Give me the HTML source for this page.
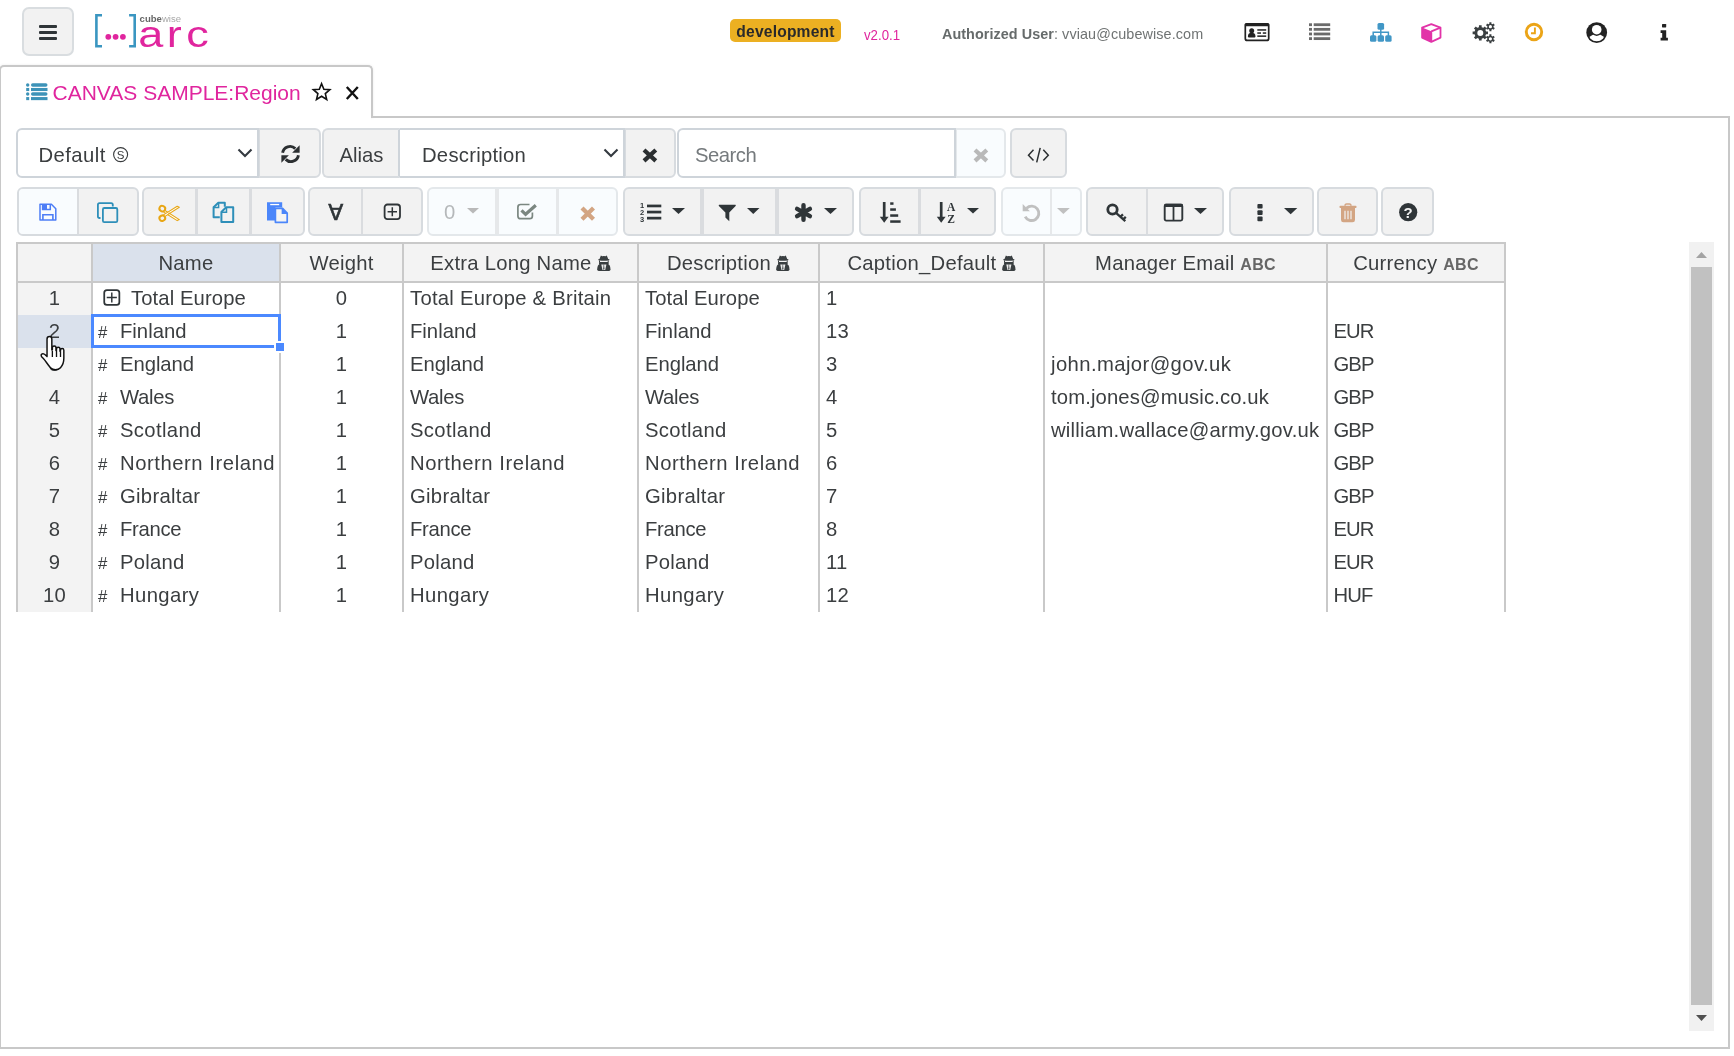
<!DOCTYPE html>
<html lang="en">
<head>
<meta charset="utf-8">
<title>Arc - CANVAS SAMPLE:Region</title>
<style>
*{box-sizing:border-box;margin:0;padding:0}
html,body{width:1734px;height:1056px;overflow:hidden;background:#fff}
body{position:relative;will-change:transform;font-family:"Liberation Sans",sans-serif;color:#3b3e40;font-size:20.25px;letter-spacing:.25px}
.abs,.abs2{position:absolute}
svg{display:block;overflow:visible;position:absolute}
#menu{left:22px;top:7px;width:52px;height:49px;background:#f2f2f2;border:2px solid #d9dde0;border-radius:7px}
#menu i{position:absolute;left:15px;width:18px;height:3px;background:#2f3538;border-radius:1px}
#badge{left:730px;top:19px;width:111px;height:23px;background:#ecb022;border-radius:5px;color:#2a2a2a;font-weight:bold;font-size:15.6px;line-height:25px;text-align:center;letter-spacing:.2px}
#ver{left:863.5px;top:24.5px;font-size:15.4px;color:#e0259e;line-height:20px;letter-spacing:0;transform:scaleX(.86);transform-origin:0 0}
#user{left:942px;top:24px;font-size:14.4px;color:#6f7373;line-height:20px;white-space:nowrap;letter-spacing:.1px}
#user b{color:#666b6b;letter-spacing:.05px}
#tabline{left:371px;top:116px;width:1359px;height:2px;background:#c8c8c8}
#panelR{left:1728px;top:116px;width:2px;height:933px;background:#c8c8c8}
#panelB{left:0;top:1047px;width:1730px;height:2px;background:#c8c8c8}
#panelL{left:0;top:70px;width:1px;height:978px;background:#c8c8c8}
#tab{left:-1px;top:65px;width:374px;height:53px;border:2px solid #c8c8c8;border-bottom:none;border-radius:5px 5px 0 0;background:#fff;box-shadow:0 0 3px rgba(0,0,0,.08)}
#tabcover{left:1px;top:116px;width:370px;height:6px;background:#fff}
#tabtxt{left:52.5px;top:79.5px;font-size:21px;line-height:26px;color:#e0259e;white-space:nowrap;letter-spacing:0}
.btn{position:absolute;background:#f2f2f2;border:2px solid #d7dbdf;height:50px;top:128px}
.r2{top:187px;height:49px}
.dis{background:#f9fcfe;border-color:#e4e8eb}
.inp{position:absolute;background:#fff;border:2px solid #ced4da;height:50px;top:128px;line-height:49px;white-space:nowrap}
.lbl{position:absolute;top:.6px;line-height:49px;white-space:nowrap}
.rl{border-radius:6px 0 0 6px}.rr{border-radius:0 6px 6px 0}.ra{border-radius:6px}.rn{border-radius:0}
.nl{border-left-width:0}.l1{border-left-width:1px}
.hc{position:absolute;z-index:2;top:242px;height:41px;background:#f3f3f3;border:2px solid #c9c9c9;border-right:none;text-align:center;line-height:38px;white-space:nowrap}
.hc.sel{background:#dae1ec}
.hc small{font-size:16px;font-weight:bold;color:#666;letter-spacing:.3px}
.vl{position:absolute;top:283px;width:2px;height:329px;background:#c9c9c9}
.c{position:absolute;height:33px;line-height:33.8px;white-space:nowrap}
.rh{left:18px;width:73px;text-align:center;background:#f3f3f3}
.hash{font-size:16.8px;letter-spacing:0;margin-top:1.2px}
</style>
</head>
<body>
<div id="menu" class="abs"><i style="top:16px"></i><i style="top:22px"></i><i style="top:28px"></i></div>
<svg style="left:90px;top:8px" width="130" height="46" viewBox="90 8 130 46"><path d="M102 15.200H96.400V46.300H102" fill="none" stroke="#3a96c1" stroke-width="2.600"/><path d="M129.100 15.200H134.700V46.300H129.100" fill="none" stroke="#3a96c1" stroke-width="2.600"/><circle cx="108.300" cy="36.800" r="2.900" fill="#e0259e"/><circle cx="115.600" cy="36.800" r="2.900" fill="#e0259e"/><circle cx="122.900" cy="36.800" r="2.900" fill="#e0259e"/><text transform="translate(0 47.100) scale(1.200 1)" x="115.17 138.90 155.17" y="0" font-family="Liberation Sans,sans-serif" font-size="37.500" fill="#e0259e">arc</text><text x="139.600" y="22.200" font-family="Liberation Sans,sans-serif" font-size="9.600" font-weight="bold" fill="#666" letter-spacing="0" textLength="41.500" lengthAdjust="spacingAndGlyphs">cube<tspan fill="#a9a9a9" font-weight="normal">wise</tspan></text></svg>
<div id="badge" class="abs">development</div>
<div id="ver" class="abs">v2.0.1</div>
<div id="user" class="abs"><b>Authorized User</b>: vviau@cubewise.com</div>
<svg style="left:1244px;top:22.3px" width="26" height="20" viewBox="0 0 26 20"><rect x="1.300" y="2" width="23.400" height="16.400" rx="2" fill="none" stroke="#222" stroke-width="1.700"/><rect x="0.600" y="1" width="24.800" height="3.300" rx="1.500" fill="#222"/><circle cx="7.700" cy="8.800" r="2.500" fill="#222"/><path d="M3.900 14.300c0-2.700 1.500-3.600 3.800-3.600s3.800 .9 3.800 3.600c0 1-.6 1.300-1.500 1.300h-4.600c-.9 0-1.500-.3-1.500-1.300z" fill="#222"/><rect x="13.300" y="7.200" width="8.900" height="1.500" fill="#222"/><rect x="13.300" y="10.300" width="3.700" height="1.500" fill="#222"/><rect x="18.800" y="10.300" width="3.400" height="1.500" fill="#222"/><rect x="13.300" y="13.400" width="8.900" height="1.500" fill="#222"/></svg>
<svg style="left:1309px;top:23px" width="22" height="18" viewBox="0 0 22 18"><rect x="0" y="0.30" width="3" height="2.800" fill="#6b6b6b"/><rect x="4.700" y="0.30" width="16.500" height="2.800" fill="#6b6b6b"/><rect x="0" y="4.94" width="3" height="2.800" fill="#6b6b6b"/><rect x="4.700" y="4.94" width="16.500" height="2.800" fill="#6b6b6b"/><rect x="0" y="9.58" width="3" height="2.800" fill="#6b6b6b"/><rect x="4.700" y="9.58" width="16.500" height="2.800" fill="#6b6b6b"/><rect x="0" y="14.22" width="3" height="2.800" fill="#6b6b6b"/><rect x="4.700" y="14.22" width="16.500" height="2.800" fill="#6b6b6b"/></svg>
<svg style="left:1370px;top:23px" width="22" height="19" viewBox="0 0 22 19"><rect x="7.500" y="0" width="6.600" height="6.700" rx="1.500" fill="#4197c6"/><rect x="0" y="12.200" width="6.400" height="6.600" rx="1.500" fill="#4197c6"/><rect x="7.600" y="12.200" width="6.400" height="6.600" rx="1.500" fill="#4197c6"/><rect x="15.200" y="12.200" width="6.400" height="6.600" rx="1.500" fill="#4197c6"/><path d="M10.800 5v8M3.200 13V9.300H18.400V13" fill="none" stroke="#4197c6" stroke-width="1.500"/></svg>
<svg style="left:1421px;top:22px" width="21" height="21" viewBox="0 0 21 21"><path d="M10.300 2.200L19.500 5.600V15.600L10.300 19.900L1.100 15.600V5.600Z" fill="#fff" stroke="#e233a8" stroke-width="1.800" stroke-linejoin="round"/><path d="M1.100 5.600L10.300 9.300V19.900L1.100 15.600Z" fill="#e233a8"/><path d="M10.300 9.300L19.500 5.600M10.300 9.300V19.900" stroke="#e233a8" stroke-width="1.800" fill="none"/></svg>
<svg style="left:1471.5px;top:21px" width="24" height="23" viewBox="0 0 24 23"><path d="M15.98 10.56L15.98 13.24L14.04 13.28L13.33 14.98L14.68 16.39L12.79 18.28L11.38 16.93L9.68 17.64L9.64 19.58L6.96 19.58L6.92 17.64L5.22 16.93L3.81 18.28L1.92 16.39L3.27 14.98L2.56 13.28L0.62 13.24L0.62 10.56L2.56 10.52L3.27 8.82L1.92 7.41L3.81 5.52L5.22 6.87L6.92 6.16L6.96 4.22L9.64 4.22L9.68 6.16L11.38 6.87L12.79 5.52L14.68 7.41L13.33 8.82L14.04 10.52ZM11.30 11.90A3 3 0 1 0 5.30 11.90A3 3 0 1 0 11.30 11.90Z" fill="#3a3f41" fill-rule="evenodd"/><path d="M22.81 7.01L21.76 8.84L20.55 8.07L19.40 8.74L19.47 10.17L17.37 10.18L17.42 8.75L16.27 8.09L15.06 8.86L14.00 7.05L15.27 6.38L15.27 5.05L13.99 4.39L15.04 2.56L16.25 3.33L17.40 2.66L17.33 1.23L19.43 1.22L19.38 2.65L20.53 3.31L21.74 2.54L22.80 4.35L21.53 5.02L21.53 6.35ZM20.00 5.70A1.6 1.6 0 1 0 16.80 5.70A1.6 1.6 0 1 0 20.00 5.70Z" fill="#3a3f41" fill-rule="evenodd"/><path d="M22.81 19.11L21.76 20.94L20.55 20.17L19.40 20.84L19.47 22.27L17.37 22.28L17.42 20.85L16.27 20.19L15.06 20.96L14.00 19.15L15.27 18.48L15.27 17.15L13.99 16.49L15.04 14.66L16.25 15.43L17.40 14.76L17.33 13.33L19.43 13.32L19.38 14.75L20.53 15.41L21.74 14.64L22.80 16.45L21.53 17.12L21.53 18.45ZM20.00 17.80A1.6 1.6 0 1 0 16.80 17.80A1.6 1.6 0 1 0 20.00 17.80Z" fill="#3a3f41" fill-rule="evenodd"/></svg>
<svg style="left:1524px;top:22.3px" width="20" height="20" viewBox="0 0 20 20"><circle cx="10" cy="10" r="7.700" fill="none" stroke="#eba417" stroke-width="2.900"/><path d="M10.900 5.600V11.200H7" fill="none" stroke="#eba417" stroke-width="1.900"/></svg>
<svg style="left:1586px;top:22px" width="22" height="22" viewBox="0 0 22 22"><circle cx="10.700" cy="10.600" r="10.400" fill="#232323"/><clipPath id="ucp"><circle cx="10.700" cy="10.600" r="8.700"/></clipPath><ellipse cx="10.700" cy="19.900" rx="8.800" ry="8" fill="#fff" clip-path="url(#ucp)"/><circle cx="10.700" cy="7.700" r="6.200" fill="#232323"/><circle cx="10.700" cy="7.700" r="4.800" fill="#fff"/></svg>
<svg style="left:1659.6px;top:23.7px" width="9" height="18" viewBox="0 0 9 18"><rect x="2" y="0" width="4.200" height="3.400" rx=".6" fill="#232323"/><path d="M0.600 6.300H6.200V13.700H7.900V16.400H0.600V13.700H2.200V9H0.600Z" fill="#232323"/></svg>
<div id="tab" class="abs"></div><div id="tabline" class="abs"></div><div id="tabcover" class="abs"></div><div id="panelR" class="abs"></div><div id="panelB" class="abs"></div><div id="panelL" class="abs"></div>
<div id="tabtxt" class="abs">CANVAS SAMPLE:Region</div>
<svg style="left:25.8px;top:82.6px" width="22" height="18" viewBox="0 0 22 18"><circle cx="1.700" cy="1.95" r="1.700" fill="#3d93b8"/><rect x="5" y="0.20" width="16.500" height="3.500" rx="1.700" fill="#3d93b8"/><rect x="0.200" y="4.95" width="3" height="3.100" fill="#3d93b8"/><rect x="5" y="4.95" width="16.500" height="3.100" fill="#3d93b8"/><circle cx="1.700" cy="11.05" r="1.700" fill="#3d93b8"/><rect x="5" y="9.30" width="16.500" height="3.500" rx="1.700" fill="#3d93b8"/><rect x="0.200" y="14.05" width="3" height="3.100" fill="#3d93b8"/><rect x="5" y="14.05" width="16.500" height="3.100" fill="#3d93b8"/></svg>
<svg style="left:311.6px;top:82.2px" width="20" height="19" viewBox="0 0 20 19"><path d="M9.60 1.70L11.89 7.24L17.87 7.71L13.31 11.61L14.71 17.44L9.60 14.30L4.49 17.44L5.89 11.61L1.33 7.71L7.31 7.24Z" fill="none" stroke="#111" stroke-width="1.600" stroke-linejoin="miter"/></svg>
<svg style="left:345px;top:85px" width="15" height="16" viewBox="0 0 15 16"><path d="M1.800 2L12.800 14M12.800 2L1.800 14" stroke="#111" stroke-width="2.400" fill="none"/></svg>
<div class="inp rl" style="left:16px;width:243px;"><span class="lbl" style="left:20.5px;letter-spacing:.45px;top:.5px">Default</span><svg style="left:94px;top:16.2px" width="18" height="18" viewBox="0 0 18 18"><circle cx="8.600" cy="8.600" r="7" fill="none" stroke="#373a3c" stroke-width="1.100"/><text x="8.600" y="12.700" text-anchor="middle" font-family="Liberation Sans,sans-serif" font-size="11.500" fill="#373a3c" letter-spacing="0">S</text></svg><svg style="left:218.7px;top:18.1px" width="16" height="10" viewBox="0 0 16 10"><path d="M1.500 1.500L8 8L14.500 1.500" fill="none" stroke="#343a40" stroke-width="2.100" stroke-linecap="butt"/></svg></div>
<div class="btn rr l1" style="left:259px;width:62px;"><svg style="left:20.5px;top:15.2px" width="19" height="18" viewBox="0 0 19 18"><path d="M1.600 7.800A7.500 7.500 0 0 1 14.300 3.600" fill="none" stroke="#2b2f31" stroke-width="2.900"/><path d="M17.400 10.200A7.500 7.500 0 0 1 4.700 14.400" fill="none" stroke="#2b2f31" stroke-width="2.900"/><path d="M18.600 0.200V7.700H11.100Z" fill="#2b2f31"/><path d="M0.400 17.800V10.300H7.900Z" fill="#2b2f31"/></svg></div>
<div class="btn rl" style="left:322px;width:78px;border-right-color:#ced4da"><span class="lbl" style="left:15.5px;letter-spacing:0">Alias</span></div>
<div class="inp rn nl" style="left:400px;width:225px;"><span class="lbl" style="left:22px">Description</span><svg style="left:203px;top:18.1px" width="16" height="10" viewBox="0 0 16 10"><path d="M1.500 1.500L8 8L14.500 1.500" fill="none" stroke="#343a40" stroke-width="2.100" stroke-linecap="butt"/></svg></div>
<div class="btn rr l1" style="left:625px;width:51px;"><svg style="left:15.8px;top:18px" width="15.8" height="14.9" viewBox="0 0 15.8 14.9"><path d="M2 2L13.8 12.9M13.8 2L2 12.9" stroke="#2b2f31" stroke-width="4.2" stroke-linecap="butt" fill="none"/></svg></div>
<div class="inp rl" style="left:677px;width:279px;"><span class="lbl" style="left:16px;color:#757a7d;letter-spacing:-.5px">Search</span></div>
<div class="btn rr l1 dis" style="left:956px;width:50px;"><svg style="left:16px;top:18px" width="15.8" height="14.9" viewBox="0 0 15.8 14.9"><path d="M2 2L13.8 12.9M13.8 2L2 12.9" stroke="#b9b9b9" stroke-width="4.2" stroke-linecap="butt" fill="none"/></svg></div>
<div class="btn ra" style="left:1010px;width:57px;"><svg style="left:15.2px;top:17px" width="23" height="16" viewBox="0 0 23 16"><path d="M6.500 2.800L1.500 8.200L6.500 13.600M16.300 2.800L21.300 8.200L16.300 13.600M13.200 0.800L9.700 15.400" fill="none" stroke="#2b2f31" stroke-width="1.500"/></svg></div>
<div class="btn r2 ra" style="left:17px;width:122px;overflow:hidden"><div class="abs" style="left:0px;top:0;width:58px;height:45px;background:#f9fcfe"></div><div class="abs" style="left:58px;top:0;width:2px;height:45px;background:#dadcdf"></div></div>
<div class="btn r2 ra" style="left:142px;width:163px;overflow:hidden"><div class="abs" style="left:51px;top:0;width:3px;height:45px;background:#dadcdf"></div><div class="abs" style="left:105px;top:0;width:3px;height:45px;background:#dadcdf"></div></div>
<div class="btn r2 ra" style="left:308px;width:115px;overflow:hidden"><div class="abs" style="left:51px;top:0;width:2px;height:45px;background:#dadcdf"></div></div>
<div class="btn r2 ra dis" style="left:427px;width:191px;overflow:hidden"><div class="abs" style="left:66px;top:0;width:4px;height:45px;background:#e6e8ea"></div><div class="abs" style="left:127px;top:0;width:3px;height:45px;background:#e6e8ea"></div></div>
<div class="btn r2 ra" style="left:623px;width:231px;overflow:hidden"><div class="abs" style="left:75px;top:0;width:4px;height:45px;background:#dadcdf"></div><div class="abs" style="left:150px;top:0;width:4px;height:45px;background:#dadcdf"></div></div>
<div class="btn r2 ra" style="left:859px;width:137px;overflow:hidden"><div class="abs" style="left:57px;top:0;width:3px;height:45px;background:#dadcdf"></div></div>
<div class="btn r2 ra dis" style="left:1001px;width:81px;overflow:hidden"><div class="abs" style="left:47px;top:0;width:2px;height:45px;background:#e6e8ea"></div></div>
<div class="btn r2 ra" style="left:1086px;width:138px;overflow:hidden"><div class="abs" style="left:58px;top:0;width:2px;height:45px;background:#dadcdf"></div></div>
<div class="btn r2 ra" style="left:1229px;width:85px;overflow:hidden"></div>
<div class="btn r2 ra" style="left:1317px;width:61px;overflow:hidden"></div>
<div class="btn r2 ra" style="left:1381px;width:53px;overflow:hidden"></div>
<svg style="left:38px;top:203px" width="20" height="19" viewBox="0 0 20 19"><path d="M2 1.300H13.400L17.800 5.700V17H2Z" fill="none" stroke="#4d7df6" stroke-width="1.500" stroke-linejoin="round"/><path d="M4.600 1.300V6.600H12.300V1.300" fill="none" stroke="#4d7df6" stroke-width="1.500"/><rect x="4.800" y="1.500" width="4.200" height="4.800" fill="#4d7df6"/><path d="M4.900 17V11.800H14.900V17" fill="none" stroke="#4d7df6" stroke-width="1.600"/></svg>
<svg style="left:96px;top:201px" width="23" height="23" viewBox="0 0 23 23"><path d="M4.500 17H3.500Q1.900 17 1.900 15.400V3.700Q1.900 2.100 3.500 2.100H15.200Q16.800 2.100 16.800 3.700V5.500" fill="none" stroke="#2e8fb9" stroke-width="1.800"/><rect x="6.900" y="7" width="14.400" height="14.200" rx="1.400" fill="none" stroke="#2e8fb9" stroke-width="1.800"/></svg>
<svg style="left:158px;top:204px" width="23" height="19" viewBox="0 0 23 19"><ellipse cx="4.300" cy="4.600" rx="2.900" ry="2.700" fill="none" stroke="#e8a614" stroke-width="2" transform="rotate(25 4.300 4.600)"/><ellipse cx="4.300" cy="14.200" rx="2.900" ry="2.700" fill="none" stroke="#e8a614" stroke-width="2" transform="rotate(-25 4.300 14.200)"/><path d="M6.600 6.200L21.300 15.600L19.200 16.600L5.900 8.200Z" fill="#fff" stroke="#e8a614" stroke-width="1.100" stroke-linejoin="round"/><path d="M6.600 12.600L21.300 3.200L19.200 2.200L5.900 10.600Z" fill="#fff" stroke="#e8a614" stroke-width="1.100" stroke-linejoin="round"/><circle cx="11.200" cy="9.400" r=".8" fill="#e8a614"/></svg>
<svg style="left:212px;top:201px" width="23" height="23" viewBox="0 0 23 23"><path d="M7.800 16.300H1.600V6.300L6.300 1.800H12.800V5.800" fill="none" stroke="#2e8fb9" stroke-width="2" stroke-linejoin="round"/><path d="M1.600 6.600H6.600V1.800" fill="none" stroke="#2e8fb9" stroke-width="1.500"/><path d="M9.400 21.100V11L14.200 6.300H21.200V21.100Z" fill="none" stroke="#2e8fb9" stroke-width="2" stroke-linejoin="round"/><path d="M9.400 11.300H14.500V6.300" fill="none" stroke="#2e8fb9" stroke-width="1.500"/></svg>
<svg style="left:266px;top:201px" width="23" height="23" viewBox="0 0 23 23"><path d="M1 1.200H16.200V6.600H9.400V19.600H1Z" fill="#4b86fa"/><rect x="4.200" y="2.900" width="9" height="1.300" fill="#fff"/><path d="M9.400 7.400H16.600L21.200 12V21.300H9.400Z" fill="#f4f4f4" stroke="#4b86fa" stroke-width="1.700" stroke-linejoin="round"/><path d="M16.400 7.400V12.200H21.200" fill="none" stroke="#4b86fa" stroke-width="1.500"/><path d="M16.400 7.400L21.200 12.200H16.400Z" fill="#4b86fa"/></svg>
<div class="abs" style="left:328.200px;top:200px;font-size:22px;font-weight:normal;-webkit-text-stroke:.55px #2f3538;line-height:26px;color:#2f3538;letter-spacing:0;font-family:'DejaVu Sans','Liberation Sans',sans-serif">&#8704;</div>
<svg style="left:382.5px;top:202.8px" width="19" height="18" viewBox="0 0 19 18"><rect x="1.600" y="1.500" width="15.400" height="14.600" rx="2.800" fill="none" stroke="#2f3538" stroke-width="1.800"/><path d="M9.300 4.300V13.300M4.600 8.800H14" stroke="#2f3538" stroke-width="1.500" fill="none"/></svg>
<div class="abs" style="left:444px;top:199px;line-height:26px;color:#b5b8ba;letter-spacing:0">0</div>
<svg style="left:467.2px;top:208px" width="12" height="6" viewBox="0 0 12 6"><path d="M0 0H12L6.0 5.6Z" fill="#b9b9b9"/></svg>
<svg style="left:516px;top:202px" width="22" height="19" viewBox="0 0 22 19"><path d="M16.400 10.600V14Q16.400 16.700 13.700 16.700H4.600Q1.900 16.700 1.900 14V5.200Q1.900 2.500 4.600 2.500H13.500" fill="none" stroke="#7b8781" stroke-width="1.700"/><path d="M5.500 8.300L9.600 12.300L19.800 3.200" fill="none" stroke="#7b8781" stroke-width="3.200"/></svg>
<svg style="left:579.5px;top:205.5px" width="16" height="15" viewBox="0 0 16 15"><path d="M2 2L13.500 13.300M13.500 2L2 13.300" stroke="#d3a583" stroke-width="4.300" fill="none"/></svg>
<svg style="left:639.5px;top:202px" width="22" height="22" viewBox="0 0 22 22"><rect x="7" y="2.6" width="14.300" height="2.700" fill="#2f3538"/><rect x="7" y="8.7" width="14.300" height="2.700" fill="#2f3538"/><rect x="7" y="14.8" width="14.300" height="2.700" fill="#2f3538"/><text x="0" y="5.6" font-family="Liberation Sans,sans-serif" font-weight="bold" font-size="7.500" fill="#2f3538" letter-spacing="0">1</text><text x="0" y="13.0" font-family="Liberation Sans,sans-serif" font-weight="bold" font-size="7.500" fill="#2f3538" letter-spacing="0">2</text><text x="0" y="20.4" font-family="Liberation Sans,sans-serif" font-weight="bold" font-size="7.500" fill="#2f3538" letter-spacing="0">3</text></svg>
<svg style="left:671.7px;top:208px" width="13" height="7" viewBox="0 0 13 7"><path d="M0 0H13L6.5 6.1Z" fill="#2f3538"/></svg>
<svg style="left:718px;top:204px" width="19" height="18" viewBox="0 0 19 18"><path d="M1 0.800H17.500Q18.200 1.400 17.600 2.100L11.300 8.600V17.200L7.400 13.600V8.600L0.900 2.100Q0.400 1.400 1 0.800Z" fill="#2f3538"/></svg>
<svg style="left:747px;top:208px" width="12.5" height="6" viewBox="0 0 12.5 6"><path d="M0 0H12.5L6.25 5.9Z" fill="#2f3538"/></svg>
<svg style="left:794px;top:203px" width="19" height="19" viewBox="0 0 19 19.300"><path d="M9.500 2.200V17.100M3 5.900L16 13.400M16 5.900L3 13.400" stroke="#2f3538" stroke-width="4.500" stroke-linecap="round" fill="none"/></svg>
<svg style="left:824px;top:208px" width="13" height="7" viewBox="0 0 13 7"><path d="M0 0H13L6.5 6.1Z" fill="#2f3538"/></svg>
<svg style="left:879.5px;top:202px" width="21" height="21" viewBox="0 0 21 21"><path d="M4.200 0V17" stroke="#2f3538" stroke-width="2.700" fill="none"/><path d="M-0.200 14.800H8.600L4.200 20.800Z" fill="#2f3538"/><rect x="10.200" y="0.3" width="3.3" height="2.500" fill="#2f3538"/><rect x="10.200" y="6.3" width="5.7" height="2.500" fill="#2f3538"/><rect x="10.200" y="12.3" width="8.0" height="2.500" fill="#2f3538"/><rect x="10.200" y="18.3" width="10.4" height="2.500" fill="#2f3538"/></svg>
<svg style="left:936.5px;top:202px" width="20" height="21" viewBox="0 0 20 21"><path d="M4.200 0V17" stroke="#2f3538" stroke-width="2.700" fill="none"/><path d="M-0.200 14.800H8.600L4.200 20.800Z" fill="#2f3538"/><text x="10" y="8.800" font-family="Liberation Serif,serif" font-weight="bold" font-size="11.500" fill="#2f3538" letter-spacing="0">A</text><text x="10.300" y="20.600" font-family="Liberation Serif,serif" font-weight="bold" font-size="11.500" fill="#2f3538" letter-spacing="0">Z</text></svg>
<svg style="left:967.2px;top:208px" width="12" height="6" viewBox="0 0 12 6"><path d="M0 0H12L6.0 5.6Z" fill="#2f3538"/></svg>
<svg style="left:1022px;top:203px" width="20" height="19" viewBox="0 0 20 19"><path d="M4.600 5.200A7.200 7.200 0 1 1 3.200 13.600" fill="none" stroke="#c0c0c0" stroke-width="2.900"/><path d="M0.700 1V8.200H7.900Z" fill="#c0c0c0"/></svg>
<svg style="left:1057.2px;top:208px" width="12.8" height="7" viewBox="0 0 12.8 7"><path d="M0 0H12.8L6.4 6.0Z" fill="#c0c0c0"/></svg>
<svg style="left:1106px;top:203px" width="22" height="20" viewBox="0 0 22 20"><circle cx="6.500" cy="6.500" r="4.700" fill="none" stroke="#2f3538" stroke-width="2.800"/><path d="M10 9.800L19.300 18.200M14.600 13.600L17 11.300M17.400 16.200L19.800 13.900" stroke="#2f3538" stroke-width="2.300" fill="none"/></svg>
<svg style="left:1163px;top:203px" width="21" height="19" viewBox="0 0 21 19"><rect x="1.700" y="1.800" width="17.600" height="15.800" rx="1.500" fill="none" stroke="#2f3538" stroke-width="1.900"/><rect x="1.200" y="0.800" width="18.600" height="3.200" rx="1.200" fill="#2f3538"/><path d="M10.500 3V17.600" stroke="#2f3538" stroke-width="1.800"/></svg>
<svg style="left:1194px;top:208px" width="13" height="7" viewBox="0 0 13 7"><path d="M0 0H13L6.5 6.1Z" fill="#2f3538"/></svg>
<svg style="left:1256.5px;top:203.5px" width="6" height="18" viewBox="0 0 6 18"><rect x=".4" y="0.0" width="5.200" height="4.600" rx="1" fill="#2f3538"/><rect x=".4" y="6.3" width="5.200" height="4.600" rx="1" fill="#2f3538"/><rect x=".4" y="12.6" width="5.200" height="4.600" rx="1" fill="#2f3538"/></svg>
<svg style="left:1284px;top:208px" width="13.3" height="7" viewBox="0 0 13.3 7"><path d="M0 0H13.3L6.65 6.3Z" fill="#2f3538"/></svg>
<svg style="left:1338.5px;top:202.5px" width="18" height="20" viewBox="0 0 18 20"><path d="M6 2.800Q6 0.900 7.600 0.900H10.400Q12 0.900 12 2.800" fill="none" stroke="#d3a583" stroke-width="1.500"/><rect x="0.500" y="2.800" width="17" height="2.200" rx=".8" fill="#d3a583"/><path d="M2 5H16V16.800Q16 19.300 13.600 19.300H4.400Q2 19.300 2 16.800Z" fill="#d3a583"/><path d="M6 7.800V16.200M9 7.800V16.200M12 7.800V16.200" stroke="#f2f2f2" stroke-width="1.200"/></svg>
<svg style="left:1398.500px;top:203.300px" width="19" height="19" viewBox="0 0 19 19"><circle cx="9.200" cy="9.200" r="9.100" fill="#2f3538"/><text x="9.200" y="14.600" text-anchor="middle" font-family="Liberation Sans,sans-serif" font-weight="bold" font-size="15" fill="#f2f2f2" letter-spacing="0">?</text></svg>
<div class="hc" style="left:16px;width:75px"></div>
<div class="hc sel" style="left:91px;width:188px">Name</div>
<div class="hc" style="left:279px;width:123px">Weight</div>
<div class="hc" style="left:402px;width:235px">Extra Long Name <svg style="position:relative;display:inline-block;vertical-align:-0.500px;left:0;top:0;margin-left:-0.500px" width="13.700" height="16" viewBox="0 0 13.700 16"><path d="M3.900 0.500L5.200 1.300L6.850 0.900L8.500 1.300L9.800 0.500L11.200 4.100Q12.700 4.300 12.500 5Q12.200 5.700 6.850 5.700Q1.500 5.700 1.200 5Q1 4.300 2.500 4.100Z" fill="#3a3f41"/><rect x="2" y="5.400" width="1" height="2" fill="#3a3f41"/><rect x="10.700" y="5.400" width="1" height="2" fill="#3a3f41"/><rect x="2" y="7" width="9.700" height="2.600" rx=".8" fill="#3a3f41"/><path d="M1.700 16Q0.200 16 0.200 14.300Q0.300 9.500 3.200 8.700H10.500Q13.400 9.500 13.500 14.300Q13.500 16 12 16Z" fill="#3a3f41"/><path d="M4.300 9.500L5.500 14.900H8.200L9.400 9.500Z" fill="#ececec"/><path d="M6.400 9.400H7.300L7.100 10.600L7.500 14L6.850 14.900L6.200 14L6.600 10.600Z" fill="#3a3f41"/></svg></div>
<div class="hc" style="left:637px;width:181px">Description <svg style="position:relative;display:inline-block;vertical-align:-0.500px;left:0;top:0;margin-left:-0.500px" width="13.700" height="16" viewBox="0 0 13.700 16"><path d="M3.900 0.500L5.200 1.300L6.850 0.900L8.500 1.300L9.800 0.500L11.200 4.100Q12.700 4.300 12.500 5Q12.200 5.700 6.850 5.700Q1.500 5.700 1.200 5Q1 4.300 2.500 4.100Z" fill="#3a3f41"/><rect x="2" y="5.400" width="1" height="2" fill="#3a3f41"/><rect x="10.700" y="5.400" width="1" height="2" fill="#3a3f41"/><rect x="2" y="7" width="9.700" height="2.600" rx=".8" fill="#3a3f41"/><path d="M1.700 16Q0.200 16 0.200 14.300Q0.300 9.500 3.200 8.700H10.500Q13.400 9.500 13.500 14.300Q13.500 16 12 16Z" fill="#3a3f41"/><path d="M4.300 9.500L5.500 14.900H8.200L9.400 9.500Z" fill="#ececec"/><path d="M6.400 9.400H7.300L7.100 10.600L7.500 14L6.850 14.900L6.200 14L6.600 10.600Z" fill="#3a3f41"/></svg></div>
<div class="hc" style="left:818px;width:225px">Caption_Default <svg style="position:relative;display:inline-block;vertical-align:-0.500px;left:0;top:0;margin-left:-0.500px" width="13.700" height="16" viewBox="0 0 13.700 16"><path d="M3.900 0.500L5.200 1.300L6.850 0.900L8.500 1.300L9.800 0.500L11.200 4.100Q12.700 4.300 12.500 5Q12.200 5.700 6.850 5.700Q1.500 5.700 1.200 5Q1 4.300 2.500 4.100Z" fill="#3a3f41"/><rect x="2" y="5.400" width="1" height="2" fill="#3a3f41"/><rect x="10.700" y="5.400" width="1" height="2" fill="#3a3f41"/><rect x="2" y="7" width="9.700" height="2.600" rx=".8" fill="#3a3f41"/><path d="M1.700 16Q0.200 16 0.200 14.300Q0.300 9.500 3.200 8.700H10.500Q13.400 9.500 13.500 14.300Q13.500 16 12 16Z" fill="#3a3f41"/><path d="M4.300 9.500L5.500 14.900H8.200L9.400 9.500Z" fill="#ececec"/><path d="M6.400 9.400H7.300L7.100 10.600L7.500 14L6.850 14.900L6.200 14L6.600 10.600Z" fill="#3a3f41"/></svg></div>
<div class="hc" style="left:1043px;width:283px">Manager Email <small>ABC</small></div>
<div class="hc" style="left:1326px;width:178px">Currency <small>ABC</small></div>
<div class="hc" style="left:1504px;width:2px;border-right:none;background:#c9c9c9"></div>
<div class="vl" style="left:16px"></div><div class="vl" style="left:91px"></div><div class="vl" style="left:279px"></div><div class="vl" style="left:402px"></div><div class="vl" style="left:637px"></div><div class="vl" style="left:818px"></div><div class="vl" style="left:1043px"></div><div class="vl" style="left:1326px"></div><div class="vl" style="left:1504px"></div>
<div class="c rh" style="top:282px">1</div><svg style="left:102.6px;top:288.8px" width="18" height="17.6" viewBox="0 0 17 17"><rect x="1" y="1" width="14.600" height="14.400" rx="2.600" fill="none" stroke="#2f3538" stroke-width="1.700"/><path d="M8.300 3.300V13.100M3.400 8.200H13.200" stroke="#2f3538" stroke-width="1.400" fill="none"/></svg>
<div class="c" style="top:282px;left:131px;letter-spacing:0.1px">Total Europe</div><div class="c" style="top:282px;left:281px;width:121px;text-align:center">0</div><div class="c" style="top:282px;left:410px">Total Europe &amp; Britain</div><div class="c" style="top:282px;left:645px;letter-spacing:0.1px">Total Europe</div><div class="c" style="top:282px;left:826px">1</div>
<div class="c rh" style="top:315px;background:#dae1ec">2</div><div class="c hash" style="top:315px;left:98px">#</div><div class="c" style="top:315px;left:120px;letter-spacing:0px">Finland</div><div class="c" style="top:315px;left:281px;width:121px;text-align:center">1</div><div class="c" style="top:315px;left:410px;letter-spacing:0px">Finland</div><div class="c" style="top:315px;left:645px;letter-spacing:0px">Finland</div><div class="c" style="top:315px;left:826px">13</div><div class="c" style="top:315px;left:1333.5px;letter-spacing:-0.9px">EUR</div>
<div class="c rh" style="top:348px">3</div><div class="c hash" style="top:348px;left:98px">#</div><div class="c" style="top:348px;left:120px;letter-spacing:-0.05px">England</div><div class="c" style="top:348px;left:281px;width:121px;text-align:center">1</div><div class="c" style="top:348px;left:410px;letter-spacing:-0.05px">England</div><div class="c" style="top:348px;left:645px;letter-spacing:-0.05px">England</div><div class="c" style="top:348px;left:826px">3</div><div class="c" style="top:348px;left:1051px;letter-spacing:0.41px">john.major@gov.uk</div><div class="c" style="top:348px;left:1333.5px;letter-spacing:-0.9px">GBP</div>
<div class="c rh" style="top:381px">4</div><div class="c hash" style="top:381px;left:98px">#</div><div class="c" style="top:381px;left:120px;letter-spacing:-0.3px">Wales</div><div class="c" style="top:381px;left:281px;width:121px;text-align:center">1</div><div class="c" style="top:381px;left:410px;letter-spacing:-0.3px">Wales</div><div class="c" style="top:381px;left:645px;letter-spacing:-0.3px">Wales</div><div class="c" style="top:381px;left:826px">4</div><div class="c" style="top:381px;left:1051px;letter-spacing:0.13px">tom.jones@music.co.uk</div><div class="c" style="top:381px;left:1333.5px;letter-spacing:-0.9px">GBP</div>
<div class="c rh" style="top:414px">5</div><div class="c hash" style="top:414px;left:98px">#</div><div class="c" style="top:414px;left:120px;letter-spacing:0.35px">Scotland</div><div class="c" style="top:414px;left:281px;width:121px;text-align:center">1</div><div class="c" style="top:414px;left:410px;letter-spacing:0.35px">Scotland</div><div class="c" style="top:414px;left:645px;letter-spacing:0.35px">Scotland</div><div class="c" style="top:414px;left:826px">5</div><div class="c" style="top:414px;left:1051px">william.wallace@army.gov.uk</div><div class="c" style="top:414px;left:1333.5px;letter-spacing:-0.9px">GBP</div>
<div class="c rh" style="top:447px">6</div><div class="c hash" style="top:447px;left:98px">#</div><div class="c" style="top:447px;left:120px;letter-spacing:0.55px">Northern Ireland</div><div class="c" style="top:447px;left:281px;width:121px;text-align:center">1</div><div class="c" style="top:447px;left:410px;letter-spacing:0.55px">Northern Ireland</div><div class="c" style="top:447px;left:645px;letter-spacing:0.55px">Northern Ireland</div><div class="c" style="top:447px;left:826px">6</div><div class="c" style="top:447px;left:1333.5px;letter-spacing:-0.9px">GBP</div>
<div class="c rh" style="top:480px">7</div><div class="c hash" style="top:480px;left:98px">#</div><div class="c" style="top:480px;left:120px;letter-spacing:0.3px">Gibraltar</div><div class="c" style="top:480px;left:281px;width:121px;text-align:center">1</div><div class="c" style="top:480px;left:410px;letter-spacing:0.3px">Gibraltar</div><div class="c" style="top:480px;left:645px;letter-spacing:0.3px">Gibraltar</div><div class="c" style="top:480px;left:826px">7</div><div class="c" style="top:480px;left:1333.5px;letter-spacing:-0.9px">GBP</div>
<div class="c rh" style="top:513px">8</div><div class="c hash" style="top:513px;left:98px">#</div><div class="c" style="top:513px;left:120px;letter-spacing:-0.3px">France</div><div class="c" style="top:513px;left:281px;width:121px;text-align:center">1</div><div class="c" style="top:513px;left:410px;letter-spacing:-0.3px">France</div><div class="c" style="top:513px;left:645px;letter-spacing:-0.3px">France</div><div class="c" style="top:513px;left:826px">8</div><div class="c" style="top:513px;left:1333.5px;letter-spacing:-0.9px">EUR</div>
<div class="c rh" style="top:546px">9</div><div class="c hash" style="top:546px;left:98px">#</div><div class="c" style="top:546px;left:120px;letter-spacing:0.25px">Poland</div><div class="c" style="top:546px;left:281px;width:121px;text-align:center">1</div><div class="c" style="top:546px;left:410px;letter-spacing:0.25px">Poland</div><div class="c" style="top:546px;left:645px;letter-spacing:0.25px">Poland</div><div class="c" style="top:546px;left:826px">11</div><div class="c" style="top:546px;left:1333.5px;letter-spacing:-0.9px">EUR</div>
<div class="c rh" style="top:579px">10</div><div class="c hash" style="top:579px;left:98px">#</div><div class="c" style="top:579px;left:120px;letter-spacing:0.4px">Hungary</div><div class="c" style="top:579px;left:281px;width:121px;text-align:center">1</div><div class="c" style="top:579px;left:410px;letter-spacing:0.4px">Hungary</div><div class="c" style="top:579px;left:645px;letter-spacing:0.4px">Hungary</div><div class="c" style="top:579px;left:826px">12</div><div class="c" style="top:579px;left:1333.5px;letter-spacing:-0.9px">HUF</div>
<div class="abs" style="left:91px;top:314px;width:190px;height:34px;border:3px solid #4b89ff"></div><div class="abs" style="left:274px;top:341px;width:12px;height:12px;background:#fff"></div><div class="abs" style="left:276px;top:343px;width:8px;height:8px;background:#4b89ff"></div>
<svg style="left:36.5px;top:334.5px" width="31" height="36" viewBox="0 0 21 27"><path d="M8.200 1.200C9.200 1.200 10 2 10 3V11.200L10.400 11.200V9.600C10.400 8.800 11 8.300 11.700 8.300C12.500 8.300 13.100 8.800 13.100 9.600V11.600H13.500V10.400C13.500 9.700 14.100 9.200 14.800 9.200C15.500 9.200 16.100 9.700 16.100 10.400V12.200H16.500V11.400C16.500 10.700 17.100 10.200 17.700 10.200C18.400 10.200 19 10.700 19 11.400V17.500C19 21 18 23 16.500 24.500C14.500 26.500 11 26.500 9 24.500C7 22.500 5.500 19.500 3.500 17.500C2 16 1.600 15.200 2.300 14.500C3 13.800 4.200 14 5.200 15L6.400 16.200V3C6.400 2 7.200 1.200 8.200 1.200Z" fill="#fff" stroke="#111" stroke-width="1.100" stroke-linejoin="round"/><path d="M10.400 12V16.500M13.500 12V16.500M16.500 12.500V16.500" stroke="#111" stroke-width="1" fill="none"/></svg>
<div class="abs" style="left:1689px;top:242px;width:25px;height:789px;background:#f1f1f1"></div>
<div class="abs" style="left:1691px;top:267px;width:21px;height:738px;background:#c1c1c1"></div>
<svg style="left:1689px;top:242px" width="25" height="789"><path d="M7 16 L12.5 10 L18 16Z" fill="#a3a3a3"/><path d="M7 773 L18 773 L12.5 779Z" fill="#505050"/></svg>
</body>
</html>
